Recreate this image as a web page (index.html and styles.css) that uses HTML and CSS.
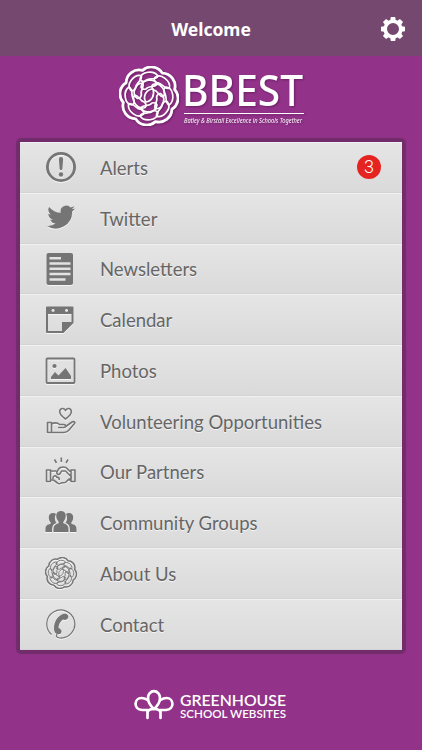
FILE: index.html
```
<!DOCTYPE html>
<html lang="en">
<head>
    <meta charset="UTF-8">
    <meta name="viewport" content="width=device-width, initial-scale=1.0">
    <title>Welcome</title>
    <link rel="stylesheet" href="styles.css">
</head>
<body>
    <svg class="defs" width="0" height="0">
        <symbol id="rose" viewBox="0 0 60 60">
            <g transform="translate(30 30)" fill="none" stroke="currentColor" stroke-linecap="round" stroke-linejoin="round">
                <path class="rose-edge" d="M-10-24.5A13 13 0 0 1 10-24.5A13 13 0 0 1 24.5-10A13 13 0 0 1 24.5 10A13 13 0 0 1 10 24.5A13 13 0 0 1-10 24.5A13 13 0 0 1-24.5 10A13 13 0 0 1-24.5-10A13 13 0 0 1-10-24.5Z" transform="rotate(8)"/>
                <g class="rose-petals">
                    <path id="outer" d="M-9-17C-8-25 5-26 9-20C7-15 0-19-4-15Q-8-14-9-17Z"/>
                    <use href="#outer" transform="rotate(45)"/>
                    <use href="#outer" transform="rotate(90)"/>
                    <use href="#outer" transform="rotate(135)"/>
                    <use href="#outer" transform="rotate(180)"/>
                    <use href="#outer" transform="rotate(225)"/>
                    <use href="#outer" transform="rotate(270)"/>
                    <use href="#outer" transform="rotate(315)"/>
                    <path id="middle" d="M-8-9C-7-17 5-18 8-12C6-8 0-11-3-7Q-7-6-8-9Z"/>
                    <use href="#middle" transform="rotate(60)"/>
                    <use href="#middle" transform="rotate(120)"/>
                    <use href="#middle" transform="rotate(180)"/>
                    <use href="#middle" transform="rotate(240)"/>
                    <use href="#middle" transform="rotate(300)"/>
                    <path d="M-3 6C-7 0-2-7 4-7C6-1 3 5-3 6Z"/>
                </g>
            </g>
        </symbol>
    </svg>

    <header class="top-bar">
        <h1>Welcome</h1>
        <svg class="settings" viewBox="0 0 24 24">
            <circle cx="12" cy="12" r="7.8" fill="none" stroke="#fff" stroke-width="3.6"/>
            <g fill="#fff">
                <path id="tooth" d="M9.3 3.2L9.8 0h4.4l.5 3.2z"/>
                <use href="#tooth" transform="rotate(45 12 12)"/>
                <use href="#tooth" transform="rotate(90 12 12)"/>
                <use href="#tooth" transform="rotate(135 12 12)"/>
                <use href="#tooth" transform="rotate(180 12 12)"/>
                <use href="#tooth" transform="rotate(225 12 12)"/>
                <use href="#tooth" transform="rotate(270 12 12)"/>
                <use href="#tooth" transform="rotate(315 12 12)"/>
            </g>
        </svg>
    </header>

    <div class="logo">
        <svg class="logo-rose"><use href="#rose"/></svg>
        <div class="logo-name">
            <svg class="logo-title" viewBox="0 0 120 47">
                <text x="-2" y="40" textLength="121" lengthAdjust="spacingAndGlyphs">BBEST</text>
            </svg>
            <svg class="logo-tagline" viewBox="0 0 120 10">
                <text x="0" y="9" textLength="118" lengthAdjust="spacingAndGlyphs">Batley &amp; Birstall Excellence in Schools Together</text>
            </svg>
        </div>
    </div>

    <ul class="menu">
        <li>
            <svg viewBox="0 0 32 32">
                <circle cx="16" cy="16" r="13.6" fill="none" stroke="currentColor" stroke-width="2.8"/>
                <path d="M13.9 8.2a2.1 2.1 0 0 1 4.2 0l-.7 9.6a1.4 1.4 0 0 1-2.8 0z"/>
                <circle cx="16" cy="23.5" r="2.2"/>
            </svg>
            <span>Alerts</span>
            <b class="badge">3</b>
        </li>
        <li>
            <svg viewBox="0 0 32 32">
                <path d="M30 6.4a11 11 0 0 1-3.3.9 5.7 5.7 0 0 0 2.5-3.1 11 11 0 0 1-3.6 1.4 5.7 5.7 0 0 0-9.8 5.2A16.2 16.2 0 0 1 4.1 4.9a5.7 5.7 0 0 0 1.7 7.6 5.6 5.6 0 0 1-2.5-.7c0 2.7 1.8 5.1 4.5 5.7a5.8 5.8 0 0 1-2.5.1 5.7 5.7 0 0 0 5.3 3.9 11.5 11.5 0 0 1-8.5 2.4 16.2 16.2 0 0 0 25-14.4A11.5 11.5 0 0 0 30 6.4z"/>
            </svg>
            <span>Twitter</span>
        </li>
        <li>
            <svg viewBox="0 0 32 32">
                <rect x="1.5" y="0" width="26.5" height="32" rx="2"/>
                <path d="M4.5 5.3H16M4.5 10.5h21M4.5 15.7h21M4.5 20.9h21M4.5 26.5h16" stroke="#e2e2e2" stroke-width="2.5"/>
            </svg>
            <span>Newsletters</span>
        </li>
        <li>
            <svg viewBox="0 0 32 32">
                <path fill-rule="evenodd" d="M2 2.5h25.5a1 1 0 0 1 1 1v15.500L18.500 29H2a1 1 0 0 1-1-1V3.500a1 1 0 0 1 1-1zM3 10v17h14v-9h9.500v-8zM8 5a1.500 1.500 0 1 0 .1 0zM21.500 5a1.500 1.500 0 1 0 .1 0z"/>
            </svg>
            <span>Calendar</span>
        </li>
        <li>
            <svg viewBox="0 0 32 32">
                <rect x="1.500" y="4.500" width="28" height="24.500" rx="1" fill="none" stroke="currentColor" stroke-width="1.800"/>
                <circle cx="9.500" cy="12" r="2.100"/>
                <path d="M6 25v-2l4-5 3.500 3.500 7-7.500 5.500 8v3z"/>
            </svg>
            <span>Photos</span>
        </li>
        <li>
            <svg class="line" viewBox="0 0 32 32">
                <path d="M20.500 14C17 11.500 14.700 9 14.700 6.800c0-3.800 4.600-4.500 5.800-1.200 1.200-3.300 5.800-2.600 5.800 1.200 0 2.200-2.300 4.700-5.800 7.200z"/>
                <path d="M2.500 17.500h4v10h-4zM6.500 19c4-2 6-1.500 8 .5h4.500c2 0 2 3 0 3h-6M20 22l7-5c2-1 3.500.3 2.300 1.800l-5.500 6.500c-1.500 1.700-3 2.200-5 2.200H6.500"/>
            </svg>
            <span>Volunteering Opportunities</span>
        </li>
        <li>
            <svg class="line" viewBox="0 0 32 32">
                <path d="M9.500 3.500l2 3.500M16.300 1.500v4.500M23 3.500l-2 3.500"/>
                <path d="M1.500 14h4v11.500h-4zM26 14h4v11.500h-4zM5.500 15h6M26 15.500c-3 0-3-4.500-7-4.500-4 0-5.500 1-7 5-1 2.500 2 3.500 3.500 1l1-2h4l5 5c2 2-.5 4-2 2.500M5.500 24h3l4 3c1 .8 2.500.8 3.500 0l4-.5c2-.5 2-2 3-2.500h3M8 23c-.5-3 3-4.500 4-1.500 2-.5 2.500 1 2 2.500"/>
            </svg>
            <span>Our Partners</span>
        </li>
        <li>
            <svg viewBox="0 0 32 32">
                <path d="M.5 25c-.2-6 .5-7 4.500-8l1-1C3 13 2.500 6 8 6q2 0 3 1c-2 4-1 7 .5 9-3.500 1-4.500 3-4.500 9zM31.500 25c.2-6-.5-7-4.500-8l-1-1c3-3 3.500-10-2-10q-2 0-3 1c2 4 1 7-.5 9 3.500 1 4.500 3 4.500 9z"/>
                <path d="M8.500 25c-.2-6 .8-7 4.500-8.500.8-.3.900-1 .5-1.700C9.500 9.500 11 4 16 4s6.500 5.500 2.500 10.800c-.4.700-.3 1.400.5 1.700 3.700 1.500 4.700 2.500 4.500 8.500z"/>
            </svg>
            <span>Community Groups</span>
        </li>
        <li>
            <svg><use href="#rose"/></svg>
            <span>About Us</span>
        </li>
        <li>
            <svg viewBox="0 0 32 32">
                <path d="M6.500 26.500A14 14 0 1 1 15 30c-4-.3-4-1.500-3-4" fill="none" stroke="currentColor" stroke-width="1.200"/>
                <path d="M18 6c-5.500 2-9 8-9 14.500 0 3 1 5 3 5.500 3 .7 4.500-.5 4.500-2.500 0-2-1.500-3-3-3.500 0-3.500 1.500-6.500 4.500-8.500 2 .8 4 .5 5-1.500C24.500 7 21 4.800 18 6z"/>
            </svg>
            <span>Contact</span>
        </li>
    </ul>

    <footer class="footer">
        <svg class="trees" viewBox="0 0 40 31">
            <g fill="none" stroke="#fff" stroke-width="2.7" stroke-linecap="round" stroke-linejoin="round">
                <path d="M20 20c-4-3.500-6-7-6-11a6 6.800 0 0 1 12 0c0 4-2 7.500-6 11z"/>
                <path d="M13.500 29V21H8C-1 20.500 0 9 7.500 9q3 0 6 2M13.500 29v-5q0-4 6.500-4M26.500 29V21H32C41 20.500 40 9 32.500 9q-3 0-6 2M26.500 29v-5q0-4-6.500-4"/>
            </g>
        </svg>
        <div class="footer-name">
            <svg class="company" viewBox="0 0 108 14">
                <text x="0" y="12.5" textLength="106" lengthAdjust="spacingAndGlyphs">GREENHOUSE</text>
            </svg>
            <svg class="company-sub" viewBox="0 0 108 13">
                <text x="0" y="10.5" textLength="106" lengthAdjust="spacingAndGlyphs">SCHOOL WEBSITES</text>
            </svg>
        </div>
    </footer>
</body>
</html>
```
FILE: styles.css
```
* {
    box-sizing: border-box;
}

body {
    margin: 0;
    height: 750px;
    overflow: hidden;
    display: flex;
    flex-direction: column;
    align-items: center;
    background-color: #923389;
    font-family: Lato, sans-serif;
}

.defs {
    position: absolute;
}

.top-bar {
    width: 100%;
    height: 56px;
    flex: none;
    display: grid;
    grid-template-columns: 1fr auto 1fr;
    align-items: center;
    padding: 2px 17px 0;
    background-color: #74486f;
}

h1 {
    grid-column: 2;
    margin: 0;
    color: white;
    font: bold 17.5px "Noto Sans", sans-serif;
}

.settings {
    justify-self: end;
    width: 24px;
    height: 24px;
}

.logo {
    display: flex;
    gap: 5px;
    height: 83px;
    flex: none;
    padding: 10px 0 0 1px;
    color: white;
    filter: drop-shadow(1px 1px 1px rgba(50, 0, 50, 0.4));
}

.logo-rose {
    width: 60px;
    height: 60px;
}

.logo-name {
    width: 120px;
}

.logo-name svg,
.footer-name svg {
    display: block;
    width: 100%;
    overflow: visible;
    fill: white;
}

.rose-edge {
    stroke-width: 2.8;
}

.rose-petals {
    stroke-width: 1.7;
}

.logo-title {
    height: 47px;
    font: 500 44px "Noto Sans", sans-serif;
}

.logo-tagline {
    height: 11px;
    border-top: 1px solid white;
    font: italic 6.2px "Noto Sans", sans-serif;
}

.menu {
    width: 388px;
    flex: none;
    margin: 0;
    padding: 0;
    list-style: none;
    border: 3px solid #722c6c;
    border-radius: 4px;
    box-shadow: 0 0 1px 1px #722c6c;
}

.menu li {
    display: flex;
    align-items: center;
    height: 50.75px;
    padding: 0 21px 0 25px;
    border-top: 1px solid #f1f1f1;
    border-bottom: 1px solid #d3d3d3;
    background: linear-gradient(#e5e5e5, #dadada);
    color: #757575;
    font-size: 18.5px;
    text-shadow: 0 1px #f5f5f5;
}

.menu svg {
    width: 32px;
    height: 32px;
    margin-right: 23px;
    fill: currentColor;
    filter: drop-shadow(0 1px #f5f5f5);
}

.menu .line {
    fill: none;
    stroke: currentColor;
    stroke-width: 1.6;
    stroke-linejoin: round;
}

.menu span {
    padding-top: 1px;
    color: #666;
}

.badge {
    width: 24px;
    height: 24px;
    margin-left: auto;
    border-radius: 50%;
    background-color: #e52421;
    color: white;
    font: 300 18px/24px Roboto, sans-serif;
    text-align: center;
    text-shadow: none;
}

.footer {
    display: flex;
    gap: 6px;
    padding-top: 36px;
}

.trees {
    width: 40px;
    height: 31px;
}

.footer-name {
    width: 108px;
    padding-top: 4px;
}

.company {
    height: 14px;
    font: 600 16px Lato, sans-serif;
}

.company-sub {
    height: 13px;
    font: 600 12px Lato, sans-serif;
}
```
